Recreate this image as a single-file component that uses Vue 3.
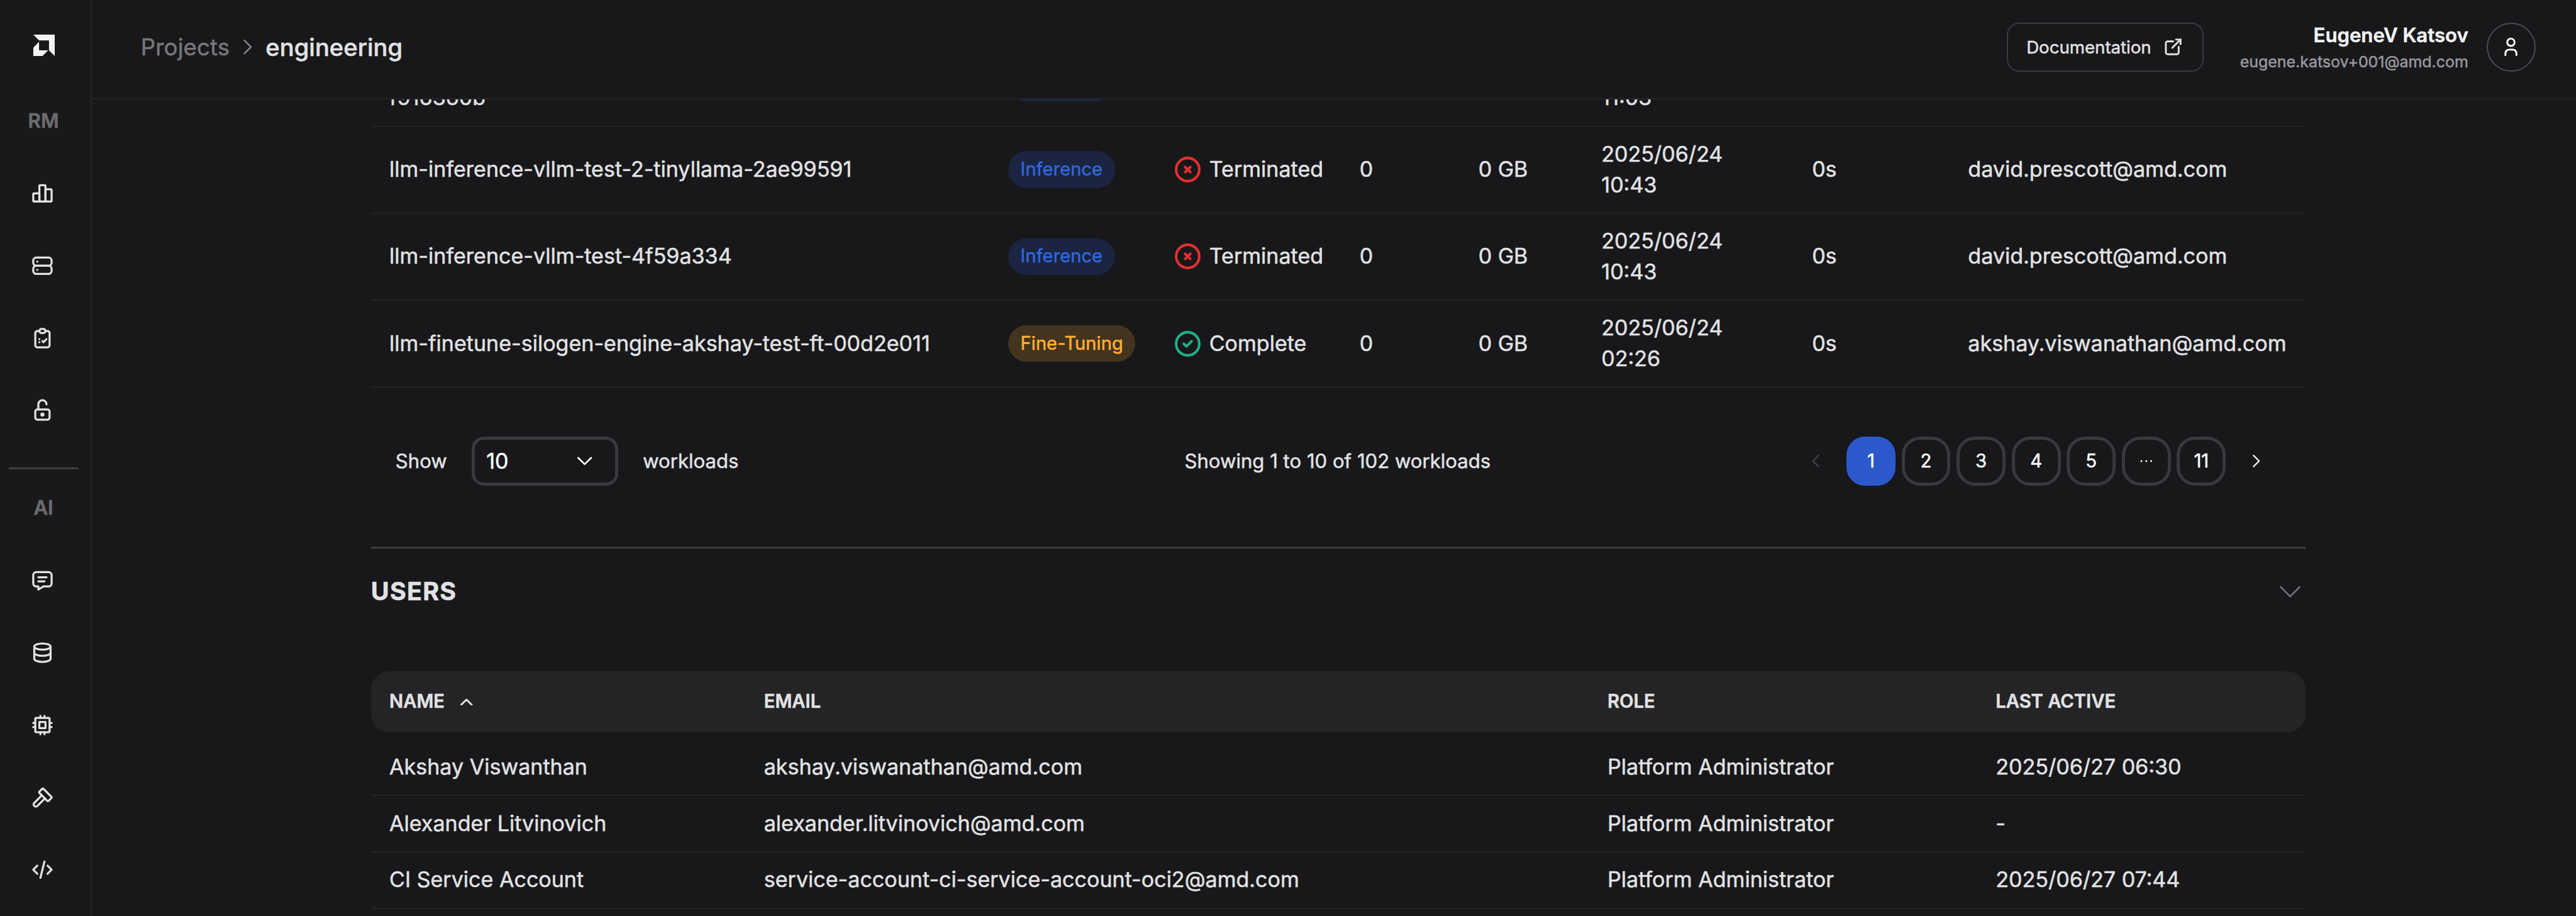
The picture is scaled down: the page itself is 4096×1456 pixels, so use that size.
<script setup>
const icons = {
  chart: [
    'M3 13a1 1 0 0 1 1 -1h4a1 1 0 0 1 1 1v6a1 1 0 0 1 -1 1h-4a1 1 0 0 1 -1 -1z',
    'M15 9a1 1 0 0 1 1 -1h4a1 1 0 0 1 1 1v10a1 1 0 0 1 -1 1h-4a1 1 0 0 1 -1 -1z',
    'M9 5a1 1 0 0 1 1 -1h4a1 1 0 0 1 1 1v14a1 1 0 0 1 -1 1h-4a1 1 0 0 1 -1 -1z',
    'M4 20h14',
  ],
  server: [
    'M3 7a3 3 0 0 1 3 -3h12a3 3 0 0 1 3 3v2a3 3 0 0 1 -3 3h-12a3 3 0 0 1 -3 -3z',
    'M3 15a3 3 0 0 1 3 -3h12a3 3 0 0 1 3 3v2a3 3 0 0 1 -3 3h-12a3 3 0 0 1 -3 -3z',
    'M7 8v.01',
    'M7 16v.01',
  ],
  clipboard: [
    'M9 5h-2a2 2 0 0 0 -2 2v12a2 2 0 0 0 2 2h10a2 2 0 0 0 2 -2v-12a2 2 0 0 0 -2 -2h-2',
    'M9 5a2 2 0 0 1 2 -2h2a2 2 0 0 1 2 2a2 2 0 0 1 -2 2h-2a2 2 0 0 1 -2 -2z',
    'M9 13v.01',
    'M9 16v.01',
    'M12 15l1 1l3 -3',
  ],
  lock: [
    'M5 13a2 2 0 0 1 2 -2h10a2 2 0 0 1 2 2v6a2 2 0 0 1 -2 2h-10a2 2 0 0 1 -2 -2z',
    'M11 16a1 1 0 1 0 2 0a1 1 0 1 0 -2 0',
    'M8 11v-5a4 4 0 0 1 8 0',
  ],
  message: [
    'M8 9h8',
    'M8 13h6',
    'M18 4a3 3 0 0 1 3 3v8a3 3 0 0 1 -3 3h-5l-5 3v-3h-2a3 3 0 0 1 -3 -3v-8a3 3 0 0 1 3 -3h12z',
  ],
  database: [
    'M4 6a8 3 0 1 0 16 0a8 3 0 1 0 -16 0',
    'M4 6v6a8 3 0 0 0 16 0v-6',
    'M4 12v6a8 3 0 0 0 16 0v-6',
  ],
  cpu: [
    'M5 6a1 1 0 0 1 1 -1h12a1 1 0 0 1 1 1v12a1 1 0 0 1 -1 1h-12a1 1 0 0 1 -1 -1z',
    'M9 9h6v6h-6z',
    'M3 10h2M3 14h2M10 3v2M14 3v2M21 10h-2M21 14h-2M14 21v-2M10 21v-2',
  ],
  hammer: [
    'M11.414 10l-7.383 7.418a2.091 2.091 0 0 0 0 2.967a2.11 2.11 0 0 0 2.976 0l7.407 -7.385',
    'M18.121 15.293l2.586 -2.586a1 1 0 0 0 0 -1.414l-7.586 -7.586a1 1 0 0 0 -1.414 0l-2.586 2.586a1 1 0 0 0 0 1.414l7.586 7.586a1 1 0 0 0 1.414 0z',
  ],
  code: ['M7 8l-4 4l4 4', 'M17 8l4 4l-4 4', 'M14 4l-4 16'],
}

const resourceNav = ['chart', 'server', 'clipboard', 'lock']
const aiNav = ['message', 'database', 'cpu', 'hammer', 'code']

const workloads = [
  { name: 'llm-inference-vllm-test-2-tinyllama-2ae99591', type: 'Inference', status: 'Terminated', date: '2025/06/24', time: '10:43', user: 'david.prescott@amd.com' },
  { name: 'llm-inference-vllm-test-4f59a334', type: 'Inference', status: 'Terminated', date: '2025/06/24', time: '10:43', user: 'david.prescott@amd.com' },
  { name: 'llm-finetune-silogen-engine-akshay-test-ft-00d2e011', type: 'Fine-Tuning', status: 'Complete', date: '2025/06/24', time: '02:26', user: 'akshay.viswanathan@amd.com' },
]

const pages = ['1', '2', '3', '4', '5', '…', '11']

const users = [
  { name: 'Akshay Viswanthan', email: 'akshay.viswanathan@amd.com', role: 'Platform Administrator', active: '2025/06/27 06:30' },
  { name: 'Alexander Litvinovich', email: 'alexander.litvinovich@amd.com', role: 'Platform Administrator', active: '-' },
  { name: 'CI Service Account', email: 'service-account-ci-service-account-oci2@amd.com', role: 'Platform Administrator', active: '2025/06/27 07:44' },
]
</script>

<template>
  <div class="app">
    <aside class="sidebar">
      <div class="brand">
        <svg class="logo" viewBox="0 0 35 35">
          <path d="M0 0H35V35L25.6 25.6V9.4H9.4Z" />
          <path d="M9.4 11.6V25.6H24.2L15 35H0V21.2Z" />
        </svg>
      </div>
      <div class="nav-label">RM</div>
      <a v-for="n in resourceNav" :key="n" class="nav-item">
        <svg class="icon" viewBox="0 0 24 24"><path v-for="d in icons[n]" :key="d" :d="d" /></svg>
      </a>
      <div class="nav-divider"></div>
      <div class="nav-label">AI</div>
      <a v-for="n in aiNav" :key="n" class="nav-item">
        <svg class="icon" viewBox="0 0 24 24"><path v-for="d in icons[n]" :key="d" :d="d" /></svg>
      </a>
    </aside>

    <div class="page">
      <header class="topbar">
        <nav class="crumbs">
          <span class="crumb">Projects</span>
          <svg class="crumb-sep" viewBox="0 0 8 14"><path d="M1.3 1.6L6.7 7L1.3 12.4" /></svg>
          <span class="crumb current">engineering</span>
        </nav>
        <div class="account">
          <button class="doc-btn">
            Documentation
            <svg class="icon doc-icon" viewBox="0 0 24 24">
              <path d="M12 6h-6a2 2 0 0 0 -2 2v10a2 2 0 0 0 2 2h10a2 2 0 0 0 2 -2v-6" />
              <path d="M11 13l9 -9" />
              <path d="M15 4h5v5" />
            </svg>
          </button>
          <div class="who">
            <div class="who-name">EugeneV Katsov</div>
            <div class="who-mail">eugene.katsov+001@amd.com</div>
          </div>
          <div class="avatar">
            <svg class="icon user-icon" viewBox="0 0 24 24">
              <path d="M8 7a4 4 0 1 0 8 0a4 4 0 0 0 -8 0" />
              <path d="M6 21v-2a4 4 0 0 1 4 -4h4a4 4 0 0 1 4 4v2" />
            </svg>
          </div>
        </div>
      </header>

      <main class="viewport">
        <div class="content">
          <section class="workloads">
            <div class="row wl-row scrolled">
              <div class="second-line">f916360b</div>
              <div><span class="chip chip-blue chip-empty"></span></div>
              <div></div>
              <div></div>
              <div></div>
              <div class="second-line">11:03</div>
            </div>
            <div v-for="w in workloads" :key="w.name" class="row wl-row">
              <div>{{ w.name }}</div>
              <div>
                <span class="chip" :class="w.type === 'Inference' ? 'chip-blue' : 'chip-amber'">{{ w.type }}</span>
              </div>
              <div class="status">
                <svg v-if="w.status === 'Complete'" class="icon status-icon ok" viewBox="0 0 24 24">
                  <circle cx="12" cy="12" r="9" /><path d="M9 12l2 2l4 -4" />
                </svg>
                <svg v-else class="icon status-icon bad" viewBox="0 0 24 24">
                  <circle cx="12" cy="12" r="9" /><path d="M10 10l4 4m0 -4l-4 4" />
                </svg>
                <span>{{ w.status }}</span>
              </div>
              <div>0</div>
              <div>0 GB</div>
              <div><div>{{ w.date }}</div><div>{{ w.time }}</div></div>
              <div>0s</div>
              <div>{{ w.user }}</div>
            </div>
          </section>

          <div class="pager">
            <div class="page-size">
              <span>Show</span>
              <div class="select">
                <span>10</span>
                <svg class="select-arrow" viewBox="0 0 12 7"><path d="M0.7 0.9L6 6.1L11.3 0.9" /></svg>
              </div>
              <span>workloads</span>
            </div>
            <div class="summary">Showing 1 to 10 of 102 workloads</div>
            <div class="pages">
              <span class="step prev"><svg viewBox="0 0 6 10"><path d="M5.3 0.5L0.8 5L5.3 9.5" /></svg></span>
              <template v-for="(p, i) in pages" :key="p">
                <span v-if="p === '…'" class="pg">
                  <svg class="dots" viewBox="0 0 10 2"><circle cx="1" cy="1" r="0.75" /><circle cx="5" cy="1" r="0.75" /><circle cx="9" cy="1" r="0.75" /></svg>
                </span>
                <span v-else class="pg" :class="{ active: i === 0 }">{{ p }}</span>
              </template>
              <span class="step next"><svg viewBox="0 0 6 10"><path d="M0.7 0.5L5.2 5L0.7 9.5" /></svg></span>
            </div>
          </div>

          <section class="users">
            <div class="users-title">
              <h2>USERS</h2>
              <svg class="collapse" viewBox="0 0 17 10"><path d="M0.8 1L8.5 8.8L16.2 1" /></svg>
            </div>
            <div class="us-head us-grid">
              <div class="sorted">
                NAME
                <svg class="sort" viewBox="0 0 10 6"><path d="M0.8 5.2L5 1L9.2 5.2" /></svg>
              </div>
              <div>EMAIL</div>
              <div>ROLE</div>
              <div>LAST ACTIVE</div>
            </div>
            <div class="us-body">
              <div v-for="u in users" :key="u.name" class="row us-row us-grid">
                <div>{{ u.name }}</div>
                <div>{{ u.email }}</div>
                <div>{{ u.role }}</div>
                <div>{{ u.active }}</div>
              </div>
            </div>
          </section>
        </div>
      </main>
    </div>
  </div>
</template>

<style>
/* 1rem = 10 layout units, 2104 units across the window */
html {
  font-size: 19.4677px;
  background: #18181a;
}
body {
  margin: 0;
  overflow: hidden;
}
</style>

<style scoped>
* {
  box-sizing: border-box;
}
.app {
  display: flex;
  height: 100vh;
  overflow: hidden;
  background: #18181a;
  color: #e2e2e4;
  font-family: Inter, "Liberation Sans", sans-serif;
  font-size: 1.75rem;
  line-height: 2.5rem;
  -webkit-text-stroke: 0.5px currentColor;
}
svg {
  display: block;
  fill: none;
  stroke: currentColor;
  stroke-linecap: round;
  stroke-linejoin: round;
}
.icon {
  width: 2rem;
  height: 2rem;
  stroke-width: 2;
}

.sidebar {
  flex: none;
  width: 7.5rem;
  background: #19191b;
  border-right: 2px solid #242427;
}
.brand {
  height: 6.9rem;
  padding: 2.85rem 0 0 2.7rem;
}
.logo {
  width: 1.75rem;
  height: 1.75rem;
  fill: #f4f4f5;
  stroke: none;
}
.nav-label {
  display: flex;
  align-items: center;
  justify-content: center;
  width: 7.1rem;
  height: 5.95rem;
  color: #6c6c6e;
  font-size: 1.6rem;
  font-weight: 600;
}
.nav-item {
  display: flex;
  align-items: center;
  justify-content: center;
  width: 6.9rem;
  height: 5.9rem;
}
.nav-divider {
  width: 5.7rem;
  height: 3px;
  margin: 1.7rem 0 0.2rem 0.7rem;
  background: #3f3f40;
}

.page {
  flex: 1;
  display: flex;
  flex-direction: column;
  min-width: 0;
}
.topbar {
  flex: none;
  display: flex;
  justify-content: space-between;
  height: 8.1rem;
  padding: 1.85rem 3.3rem 0 4rem;
  border-bottom: 2px solid #242427;
}
.crumbs {
  display: flex;
  align-items: center;
  height: 4rem;
  font-size: 1.89rem;
}
.crumb {
  color: #77777a;
}
.crumb.current {
  color: #e2e2e4;
  font-size: 1.96rem;
  font-weight: 500;
}
.crumb-sep {
  width: 0.8rem;
  height: 1.4rem;
  margin: 0 1.07rem;
  color: #8a8a8e;
  stroke-width: 1.2;
}
.account {
  display: flex;
  height: 4rem;
}
.doc-btn {
  display: flex;
  align-items: center;
  justify-content: space-between;
  width: 16.1rem;
  height: 4rem;
  padding: 0 1.5rem;
  border: 2px solid #3a3a40;
  border-radius: 1rem;
  background: none;
  color: #e2e2e4;
  font: inherit;
  font-size: 1.42rem;
}
.doc-icon {
  width: 1.8rem;
  height: 1.8rem;
}
.who {
  margin: -0.1rem 1.5rem 0 0;
  padding-left: 2.95rem;
  text-align: right;
  white-space: nowrap;
}
.who-name {
  color: #f4f4f5;
  font-size: 1.6rem;
  font-weight: 600;
  line-height: 2.3rem;
}
.who-mail {
  color: #98989f;
  font-size: 1.28rem;
  line-height: 2rem;
}
.avatar {
  display: flex;
  align-items: center;
  justify-content: center;
  width: 4rem;
  height: 4rem;
  border: 2px solid #4a4a50;
  border-radius: 50%;
  color: #fff;
}
.user-icon {
  width: 1.8rem;
  height: 1.8rem;
}

.viewport {
  flex: 1;
  min-height: 0;
  overflow: hidden;
}
.content {
  width: 158rem;
  margin: -4.85rem 0 0 22.8rem;
}
.row {
  align-items: center;
  border-bottom: 2px solid #242427;
}
.wl-row {
  display: grid;
  grid-template-columns: 50.55rem 13.4rem 15.3rem 9.7rem 10.05rem 17.2rem 12.75rem 1fr;
  height: 7.1rem;
  padding-left: 1.5rem;
  white-space: nowrap;
}
.second-line {
  padding-top: 2.5rem;
}
.chip {
  display: inline-flex;
  align-items: center;
  height: 3rem;
  padding: 0 1rem;
  border-radius: 1.5rem;
  font-size: 1.5rem;
  vertical-align: middle;
}
.chip-blue {
  background: #1b2440;
  color: #2f68dc;
}
.chip-amber {
  background: #43341f;
  color: #ffb032;
}
.chip-empty {
  width: 8.7rem;
}
.status {
  display: flex;
  align-items: center;
  gap: 0.5rem;
}
.status-icon {
  width: 2.52rem;
  height: 2.52rem;
}
.bad {
  color: #e5302f;
}
.ok {
  color: #24ae89;
}

.pager {
  display: grid;
  grid-template-columns: 64.45rem 1fr auto;
  align-items: center;
  height: 13rem;
  padding: 4rem 2rem 5rem 2rem;
  font-size: 1.6rem;
}
.page-size {
  display: flex;
  align-items: center;
}
.select {
  display: flex;
  align-items: center;
  justify-content: space-between;
  width: 12rem;
  height: 4rem;
  margin: 0 2rem;
  padding: 0 1.88rem 0 0.95rem;
  border: 5px solid #38383e;
  border-radius: 1rem;
  color: #fff;
  font-size: 1.75rem;
}
.select-arrow {
  width: 1.2rem;
  height: 0.7rem;
  stroke-width: 1.4;
}
.pages {
  display: flex;
  gap: 0.5rem;
}
.pg,
.step {
  display: flex;
  align-items: center;
  justify-content: center;
  width: 4rem;
  height: 4rem;
  border-radius: 1.5rem;
  color: #fff;
  font-size: 1.5rem;
}
.pg {
  border: 5px solid #38383e;
}
.pg.active {
  border-color: #2b59cc;
  background: #2b59cc;
}
.step svg {
  width: 0.6rem;
  height: 1rem;
  stroke-width: 1.2;
}
.prev {
  color: #45454a;
}
.dots {
  width: 1rem;
  height: 0.2rem;
  fill: #fff;
  stroke: none;
}

.users {
  border-top: 3px solid #3d3d40;
}
.users-title {
  display: flex;
  align-items: center;
  justify-content: space-between;
  height: 10rem;
  padding: 0 0.4rem 3rem 0;
}
h2 {
  margin: 0;
  font-size: 2.03rem;
  font-weight: 700;
  letter-spacing: 0.03em;
}
.collapse {
  width: 1.7rem;
  height: 1rem;
  color: #6f6f76;
  stroke-width: 1.4;
}
.us-grid {
  display: grid;
  grid-template-columns: 30.6rem 68.9rem 31.7rem 1fr;
  align-items: center;
  padding-left: 1.5rem;
  white-space: nowrap;
}
.us-head {
  height: 5rem;
  border-radius: 1.5rem;
  background: #242426;
  font-size: 1.5rem;
  font-weight: 600;
}
.sorted {
  display: flex;
  align-items: center;
  gap: 1.3rem;
}
.sort {
  width: 1rem;
  height: 0.6rem;
  stroke-width: 1.5;
}
.us-body {
  padding-top: 0.6rem;
}
.us-row {
  height: 4.6rem;
}
</style>
